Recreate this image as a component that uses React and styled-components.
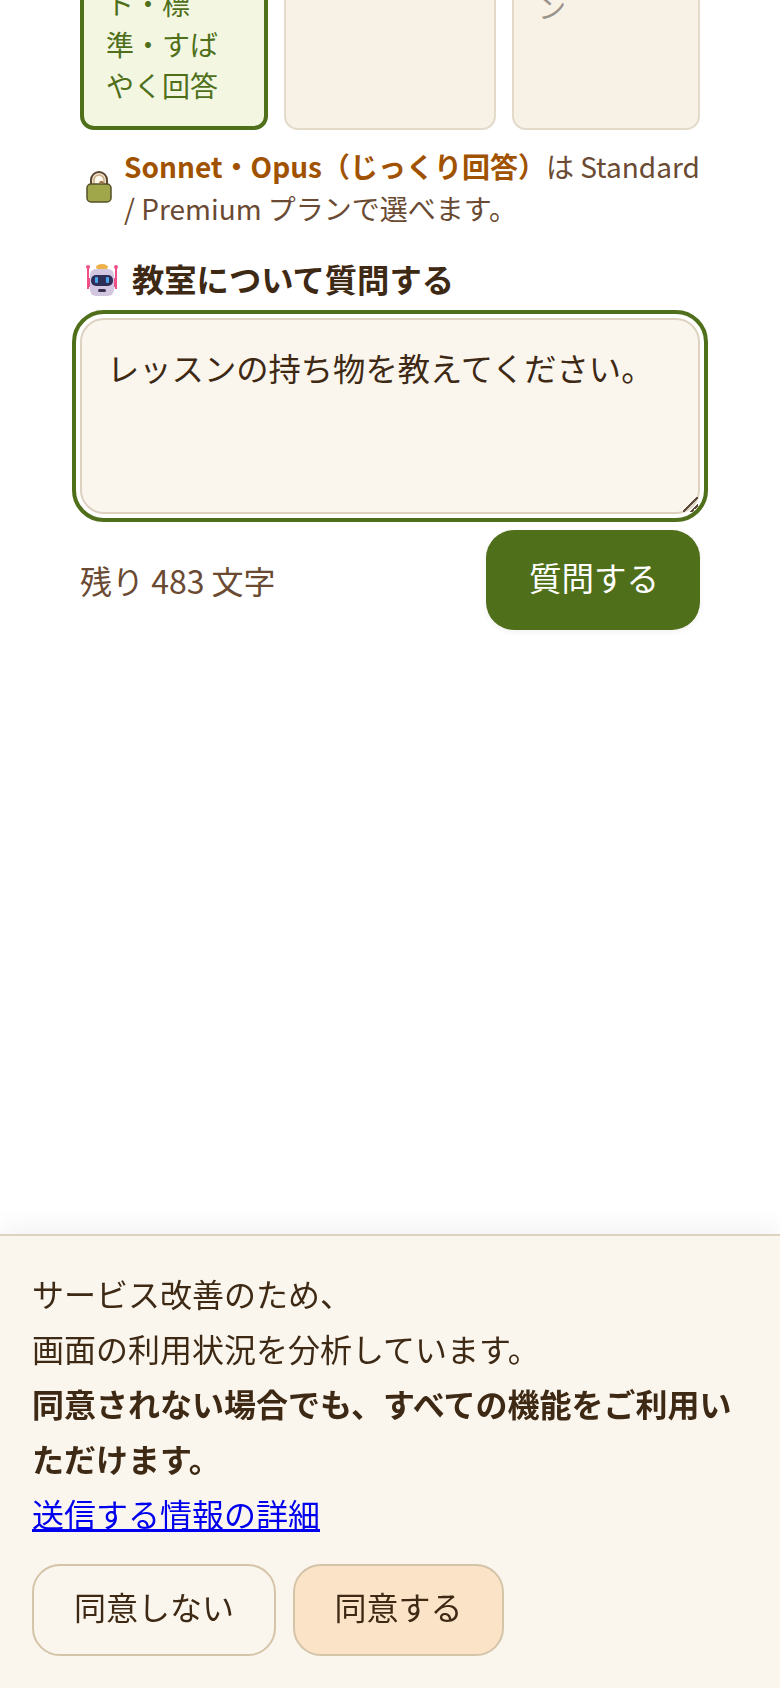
import React from "react";
import styled, { createGlobalStyle } from "styled-components";

const Global = createGlobalStyle`
  html, body { margin: 0; padding: 0; background: #fff; }
  body { height: 1688px; overflow: hidden; font-family: "Noto Sans CJK JP", "Noto Sans", sans-serif; color: #3e2914; }
  * { box-sizing: border-box; }
`;

const Page = styled.main`
  width: 780px;
  height: 1688px;
  padding: 0 80px;
  display: flex;
  flex-direction: column;
`;

const CardRow = styled.div`
  height: 130px;
  display: grid;
  grid-template-columns: 188px 212px 188px;
  grid-auto-rows: 130px;
  gap: 16px;
  align-items: end;
  overflow: hidden;
`;

const Card = styled.div`
  height: 300px;
  padding: 0 ${p => (p.$selected ? "22px 20px" : "24px 18px")};
  display: flex;
  flex-direction: column;
  justify-content: flex-end;
  border: ${p => (p.$selected ? "4px solid #4f6f1a" : "2px solid #e3dac9")};
  border-radius: 14px;
  background: ${p => (p.$selected ? "#f3f7e2" : "#f7f1e6")};
  color: ${p => (p.$selected ? "#4f6f1a" : "#9a938c")};
  font-size: 28px;
  line-height: 41px;
`;

const Note = styled.div`
  margin-top: 15px;
  padding-left: 6px;
  display: flex;
  align-items: center;
  gap: 12px;
  font-size: 28px;
  line-height: 42px;
  color: #6a4a32;
`;

const NoteText = styled.p`
  margin: 0;
  flex: 1;
  margin-right: -3px;
`;

const Strong = styled.strong`
  color: #a05200;
  font-weight: 700;
`;

const Label = styled.div`
  margin-top: 27px;
  padding-left: 6px;
  display: flex;
  align-items: center;
  gap: 14px;
  font-size: 32.3px;
  line-height: 44px;
  font-weight: 700;
  color: #3e2914;
`;

const Area = styled.textarea`
  display: block;
  margin-top: 18px;
  width: 620px;
  height: 196px;
  padding: 25px 25px;
  border: 2px solid #ddd2c0;
  border-radius: 24px;
  outline: 4px solid #4f6f1a;
  outline-offset: 4px;
  background: #faf6ee;
  color: #3e2914;
  font: 400 32.3px/44px "Noto Sans CJK JP", sans-serif;

  &::-webkit-resizer {
    background: linear-gradient(
      135deg,
      transparent 0 46%,
      #5f4a3e 46% 54%,
      transparent 54% 72%,
      #5f4a3e 72% 80%,
      transparent 80%
    );
  }
`;

const Footer = styled.div`
  margin-top: 16px;
  display: flex;
  justify-content: space-between;
  align-items: center;
`;

const Count = styled.span`
  margin-top: -1px;
  font-size: 32px;
  color: #6a4a32;
`;

const Send = styled.button`
  width: 214px;
  height: 100px;
  padding: 0 0 8px 2px;
  border: 0;
  border-radius: 28px;
  background: #4f6f1a;
  color: #fff;
  font: 400 32.5px "Noto Sans CJK JP", sans-serif;
  box-shadow: 0 2px 6px rgba(0, 0, 0, 0.06);
`;

const Banner = styled.aside`
  position: fixed;
  left: 0;
  right: 0;
  bottom: 0;
  height: 454px;
  padding: 30px 32px 0;
  background: #faf6ee;
  border-top: 2px solid #ddd2c0;
  box-shadow: 0 -8px 24px rgba(0, 0, 0, 0.05);
  font-size: 32px;
  line-height: 55px;
  color: #3e2914;
`;

const Line = styled.div``;

const BoldLine = styled.div`
  font-weight: 700;
`;

const Detail = styled.a`
  color: #0000ee;
  text-decoration: underline;
`;

const Actions = styled.div`
  margin-top: 23px;
  display: flex;
  gap: 17px;
`;

const Choice = styled.button`
  height: 92px;
  width: ${p => p.$w}px;
  padding: 0 0 8px;
  border: 2px solid #d4c4a8;
  border-radius: 28px;
  background: ${p => (p.$primary ? "#fbe3c8" : "#faf6ee")};
  color: #3e2914;
  font: 400 32px "Noto Sans CJK JP", sans-serif;
`;

const LockIcon = () => (
  <svg width="26" height="32" viewBox="0 0 26 32" aria-hidden="true">
    <path d="M5 14V9a8 8 0 0 1 16 0v5" fill="#f3e7d3" stroke="#5b4630" strokeWidth="2" />
    <path d="M8 14V9a5 5 0 0 1 10 0v5z" fill="#fff8ec" stroke="#c9ae88" strokeWidth="1.5" />
    <path d="M13 12c1-3 4-3 5 0z" fill="#a8743c" />
    <rect x="1" y="13" width="24" height="18" rx="4" fill="#a0a64a" stroke="#55502a" strokeWidth="1.5" />
  </svg>
);

const RobotIcon = () => (
  <svg width="32" height="32" viewBox="0 0 32 32" style={{ marginTop: 4 }} aria-hidden="true">
    <rect x="1" y="3" width="2" height="22" fill="#f0508a" />
    <rect x="29" y="3" width="2" height="22" fill="#f0508a" />
    <circle cx="2" cy="3" r="2" fill="#f0508a" />
    <circle cx="30" cy="3" r="2" fill="#f0508a" />
    <rect x="2" y="14" width="3" height="9" fill="#f0508a" />
    <rect x="27" y="14" width="3" height="9" fill="#f0508a" />
    <ellipse cx="16" cy="3" rx="6" ry="3" fill="#eeb04a" />
    <rect x="4" y="5" width="24" height="27" rx="6" fill="#d2c6e0" />
    <rect x="5" y="11" width="22" height="11" rx="5" fill="#2e2e58" />
    <rect x="9" y="13" width="3" height="6" rx="1" fill="#4aa6ea" />
    <rect x="20" y="13" width="3" height="6" rx="1" fill="#4aa6ea" />
    <rect x="12" y="25" width="8" height="3" rx="1.5" fill="#3a3050" />
  </svg>
);

export default function App() {
  return (
    <>
      <Global />
      <Page>
        <CardRow>
          <Card $selected>
            <div>ト・標</div>
            <div>準・すば</div>
            <div>やく回答</div>
          </Card>
          <Card />
          <Card>
            <div>ン</div>
            <div>&nbsp;</div>
            <div>&nbsp;</div>
          </Card>
        </CardRow>
        <Note>
          <LockIcon />
          <NoteText>
            <Strong>Sonnet・Opus（じっくり回答）</Strong>は Standard / Premium プランで選べます。
          </NoteText>
        </Note>
        <Label>
          <RobotIcon />
          教室について質問する
        </Label>
        <Area defaultValue="レッスンの持ち物を教えてください。" />
        <Footer>
          <Count>残り 483 文字</Count>
          <Send>質問する</Send>
        </Footer>
      </Page>
      <Banner>
        <Line>サービス改善のため、</Line>
        <Line>画面の利用状況を分析しています。</Line>
        <BoldLine>同意されない場合でも、すべての機能をご利用いただけます。</BoldLine>
        <Detail href="#">送信する情報の詳細</Detail>
        <Actions>
          <Choice $w={244}>同意しない</Choice>
          <Choice $w={211} $primary>同意する</Choice>
        </Actions>
      </Banner>
    </>
  );
}
